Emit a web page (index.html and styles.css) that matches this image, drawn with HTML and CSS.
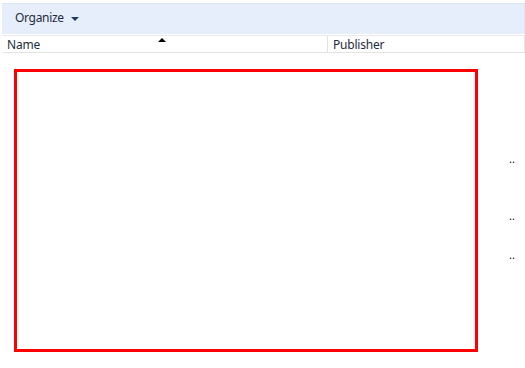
FILE: index.html
```html
<!DOCTYPE html>
<html lang="en">
<head>
  <meta charset="UTF-8" />
  <title>Programs</title>
  <link rel="stylesheet" href="styles.css">
</head>
<body>
  <div class="toolbar">
    <span class="organize">Organize</span>
    <span class="caret"></span>
  </div>

  <div class="header">
    <div class="col col-name">Name<span class="sort"></span></div>
    <div class="col col-publisher">Publisher</div>
  </div>

  <div class="content">
    <div class="highlight"></div>
    <div class="rows">
      <div class="row row-1">..</div>
      <div class="row row-2">..</div>
      <div class="row row-3">..</div>
    </div>
  </div>
</body>
</html>
```

FILE: styles.css
```css
* {
  margin: 0;
  padding: 0;
  box-sizing: border-box;
}

body {
  background: #fff;
  font-family: 'Noto Sans', 'Open Sans', sans-serif;
  font-size: 12px;
  color: #000;
  width: 525px;
  height: 368px;
  overflow: hidden;
}

.toolbar {
  margin: 3px 0 0 2px;
  height: 31px;
  background: #e6eefc;
  border-top: 1px solid #dde5f3;
  border-right: 1px solid #dfe3ea;
  display: flex;
  align-items: center;
  padding-left: 13px;
  color: #1e2b3c;
}

.organize {
  line-height: 14px;
  margin-top: -2px;
  letter-spacing: -0.3px;
}

.caret {
  margin-left: 7px;
  margin-top: -1px;
  width: 0;
  height: 0;
  border-left: 4px solid transparent;
  border-right: 4px solid transparent;
  border-top: 4px solid #1e3a5f;
}

.header {
  margin: 1px 0 0 3px;
  height: 18px;
  display: flex;
  border-top: 1px solid #e8e8e8;
  border-bottom: 1px solid #e3e3e3;
  border-right: 1px solid #e3e3e3;
}

.col {
  position: relative;
  padding-left: 4px;
  line-height: 17px;
  color: #1e2b3c;
  letter-spacing: -0.2px;
}

.col-name {
  width: 325px;
  border-right: 1px solid #e3e3e3;
}

.col-publisher {
  flex: 1;
  padding-left: 5px;
}

.sort {
  position: absolute;
  left: 155px;
  top: 2px;
  width: 0;
  height: 0;
  border-left: 4px solid transparent;
  border-right: 4px solid transparent;
  border-bottom: 4px solid #000;
}

.content {
  display: flex;
}

.highlight {
  margin: 16px 0 0 14px;
  width: 464px;
  height: 283px;
  border: 3px solid #ff0000;
}

.rows {
  margin-left: 31px;
  padding-top: 100px;
  display: flex;
  flex-direction: column;
  font-size: 11px;
  line-height: 12px;
}

.row-2 {
  margin-top: 45px;
}

.row-3 {
  margin-top: 27px;
}
```
